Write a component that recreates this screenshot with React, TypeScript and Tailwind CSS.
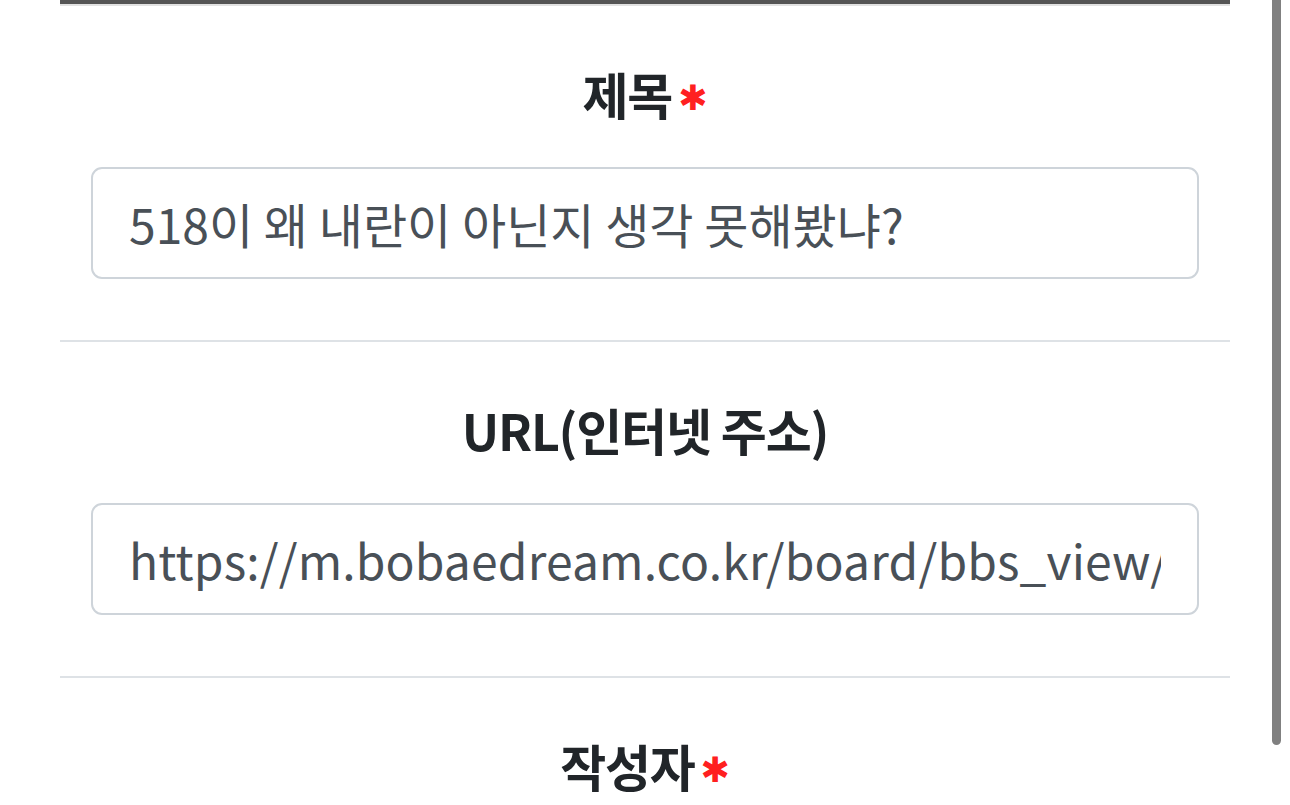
// Post write form - title / URL / author fields

const FONT = "font-['Noto_Sans_CJK_KR','Noto_Sans',sans-serif]";

function FieldLabel({ text, required }: { text: string; required?: boolean }) {
  return (
    <div className="flex h-[60px] items-center justify-center">
      <span className="text-[50px] font-bold leading-none tracking-[-1.2px] text-[#212529]">{text}</span>
      {required && (
        <span className="ml-[6px] mt-[10px] font-['DejaVu_Sans',sans-serif] text-[35px] font-bold leading-none text-[#ff2020]">
          ✱
        </span>
      )}
    </div>
  );
}

function TextField({ value, wide }: { value: string; wide?: boolean }) {
  return (
    <div className="mx-[31px] mt-[44px]">
      <input
        readOnly
        value={value}
        className={`${FONT} block h-[112px] w-full rounded-[11px] border-2 border-[#ced4da] bg-white px-[36px] text-[48px] text-[#495057] outline-none ${
          wide ? "tracking-[0.15px]" : ""
        }`}
      />
    </div>
  );
}

function Section({
  label,
  required,
  value,
  wide,
  last,
}: {
  label: string;
  required?: boolean;
  value?: string;
  wide?: boolean;
  last?: boolean;
}) {
  return (
    <section className={`pt-[57px] pb-[61px] ${last ? "" : "border-b-2 border-[#dee2e6]"}`}>
      <FieldLabel text={label} required={required} />
      {value !== undefined && <TextField value={value} wide={wide} />}
    </section>
  );
}

export default function App() {
  return (
    <div className={`${FONT} relative h-[805px] overflow-hidden bg-white`}>
      <div className="mx-[60px]">
        {/* top edge of the form card */}
        <div className="h-[4px] bg-[#555555]" />
        <div className="h-[2px] bg-[#e2e2e2]" />

        <Section label="제목" required value="518이 왜 내란이 아닌지 생각 못해봤냐?" />
        <Section
          label="URL(인터넷 주소)"
          value="https://m.bobaedream.co.kr/board/bbs_view/politic/2510345"
          wide
        />
        <Section label="작성자" required last />
      </div>

      {/* overlay scrollbar thumb */}
      <div className="absolute left-[1272px] top-0 h-[745px] w-[9px] rounded-b-full bg-[#808080]" />
    </div>
  );
}
